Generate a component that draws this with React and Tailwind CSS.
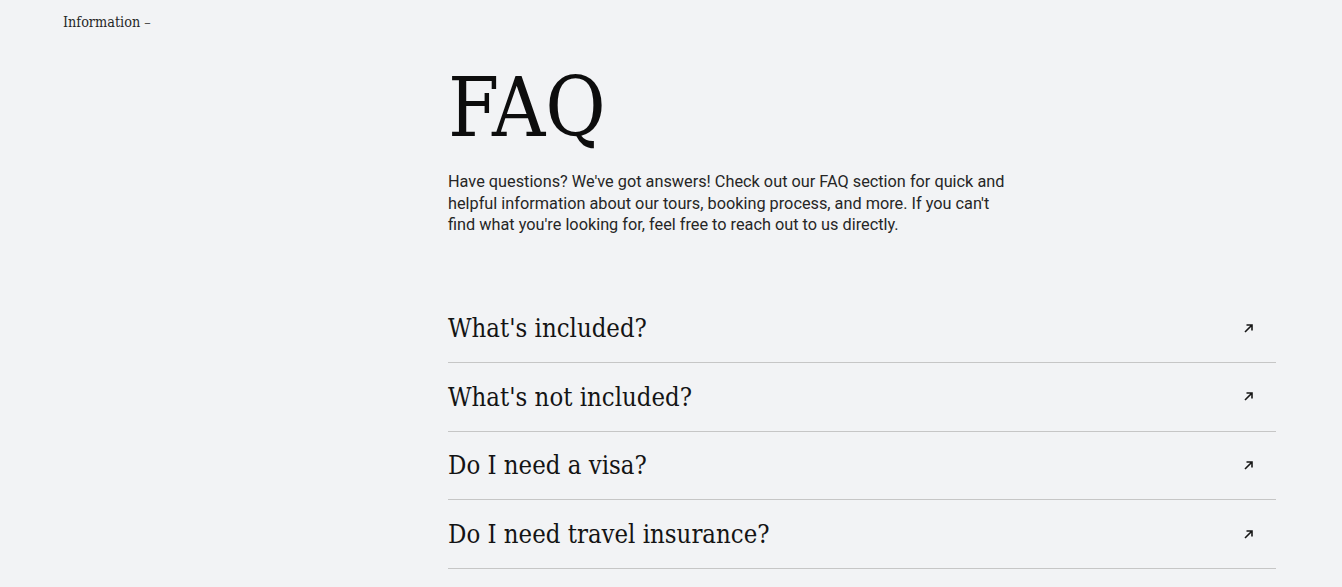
const questions = [
  "What's included?",
  "What's not included?",
  "Do I need a visa?",
  "Do I need travel insurance?",
];

const slab = { fontFamily: '"Roboto Slab", "DejaVu Serif Condensed", "DejaVu Serif", serif' };

function ArrowIcon() {
  return (
    <svg width="11" height="11" viewBox="0 0 11 11" fill="none" className="text-neutral-900">
      <path d="M2 9L9 2M3.5 2H9V7.5" stroke="currentColor" strokeWidth="1.6" />
    </svg>
  );
}

export default function App() {
  return (
    <div className="min-h-[587px] bg-[#f2f3f5] text-[#111]" style={{ fontFamily: 'Roboto, "Liberation Sans", sans-serif' }}>
      <div className="px-[63px] pt-[13px] text-[14.3px] leading-[18px] text-neutral-800" style={slab}>
        Information <span className="text-neutral-600">–</span>
      </div>
      <section className="ml-[448px] w-[828px]">
        <h1 className="mt-[32px] text-[82px] leading-[90px] font-normal text-[#0d0d0d]" style={slab}>
          FAQ
        </h1>
        <p className="mt-[18px] max-w-[570px] text-[16.3px] leading-[21.5px] text-neutral-800">
          Have questions? We've got answers! Check out our FAQ section for quick and helpful information about our
          tours, booking process, and more. If you can't find what you're looking for, feel free to reach out to us
          directly.
        </p>
        <div className="mt-[59px]">
          {questions.map((q) => (
            <div key={q} className="flex h-[68.6px] items-center justify-between border-b border-[#c6c6c6] pr-[22px]">
              <span className="text-[25.5px] leading-[32px] text-[#141414]" style={slab}>
                {q}
              </span>
              <ArrowIcon />
            </div>
          ))}
        </div>
      </section>
    </div>
  );
}
